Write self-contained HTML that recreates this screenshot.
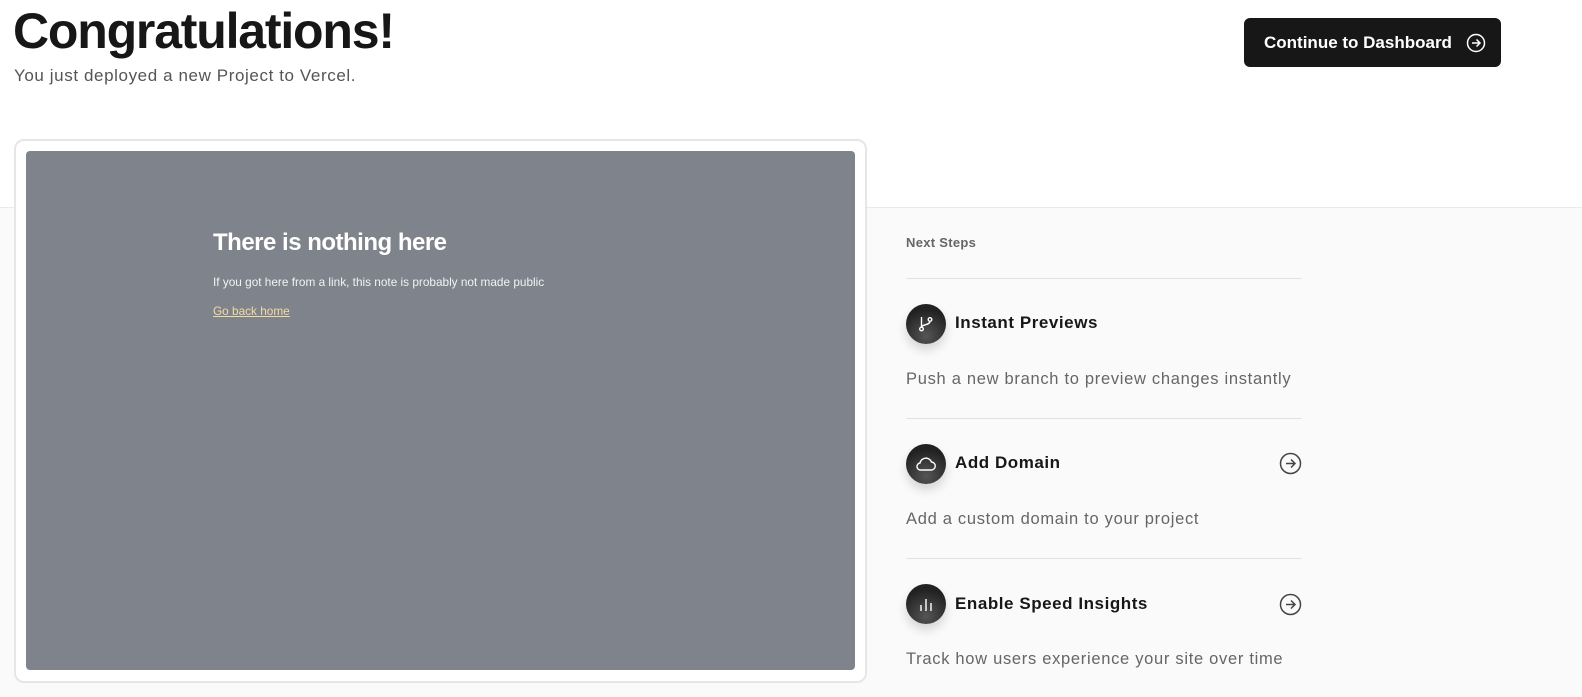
<!DOCTYPE html>
<html><head><meta charset="utf-8"><style>
*{box-sizing:border-box;margin:0;padding:0}
body{width:1582px;height:697px;overflow:hidden;background:#fff;font-family:"Liberation Sans",Arial,sans-serif;position:relative}
.bottom{position:absolute;left:0;top:207px;width:1582px;height:490px;background:#fafafa;border-top:1px solid #eaeaea}
h1{position:absolute;left:13px;top:1px;font-size:50px;font-weight:700;color:#171717;letter-spacing:-1.2px;line-height:60px}
.sub{position:absolute;left:14px;top:66px;font-size:17px;color:#555;letter-spacing:0.6px}
.btn{position:absolute;left:1244px;top:18px;width:257px;height:49px;background:#171717;border-radius:6px;color:#fff;font-size:17px;font-weight:700;display:flex;align-items:center;padding-left:20px}
.btn svg{position:absolute;right:15px;top:15px}
.card{position:absolute;left:14px;top:139px;width:853px;height:544px;background:#fff;border:2px solid #e6e6e6;border-radius:10px}
.shot{position:absolute;left:10px;top:10px;width:829px;height:519px;background:#7f838b;border-radius:4px}
.shot h2{position:absolute;left:187px;top:78px;color:#fff;font-size:24px;font-weight:700;letter-spacing:-0.5px}
.shot p{position:absolute;left:187px;top:124px;color:#f2f2f2;font-size:11.8px}
.shot a{position:absolute;left:187px;top:153px;color:#f3dca2;font-size:11.8px;text-decoration:underline}
.ns{position:absolute;left:906px;top:235px;font-size:13px;font-weight:700;color:#666;letter-spacing:0.3px}
.hr{position:absolute;left:906px;width:396px;height:1px;background:#e2e2e2}
.ic{position:absolute;left:906px;width:40px;height:40px;border-radius:50%;background:radial-gradient(circle at 50% 80%,#555,#222 70%);box-shadow:0 6px 10px rgba(0,0,0,.15);display:flex;align-items:center;justify-content:center}
.t{position:absolute;left:955px;font-size:17px;font-weight:700;color:#171717;letter-spacing:0.55px}
.d{position:absolute;left:906px;font-size:16.5px;color:#666;letter-spacing:0.7px}
.ar{position:absolute;left:1279px}
</style></head><body>
<div class="bottom"></div>
<h1>Congratulations!</h1>
<div class="sub">You just deployed a new Project to Vercel.</div>
<div class="btn">Continue to Dashboard<svg width="20" height="20" viewBox="0 0 20 20" fill="none" stroke="#fff" stroke-width="1.5"><circle cx="10" cy="10" r="8.5"/><path d="M6 10h8M10.5 6.5 14 10l-3.5 3.5"/></svg></div>
<div class="card"><div class="shot"><h2>There is nothing here</h2><p>If you got here from a link, this note is probably not made public</p><a>Go back home</a></div></div>
<div class="ns">Next Steps</div>
<div class="hr" style="top:278px"></div>
<div class="ic" style="top:304px"><svg width="18" height="18" viewBox="0 0 18 18" fill="none" stroke="#fff" stroke-width="1.4"><circle cx="4.5" cy="14" r="1.8"/><circle cx="13" cy="4.5" r="1.8"/><path d="M4.5 2v10.2M13 6.3c0 4-8.5 3-8.5 6"/></svg></div>
<div class="t" style="top:313px">Instant Previews</div>
<div class="d" style="top:370px">Push a new branch to preview changes instantly</div>
<div class="hr" style="top:418px"></div>
<div class="ic" style="top:444px"><svg width="22" height="18" viewBox="0 0 22 18" fill="none" stroke="#fff" stroke-width="1.4"><path d="M6 15h10a4 4 0 0 0 .5-8A6 6 0 0 0 5 8a3.5 3.5 0 0 0 1 7z"/></svg></div>
<div class="t" style="top:453px">Add Domain</div>
<svg class="ar" style="top:452px" width="23" height="23" viewBox="0 0 23 23" fill="none" stroke="#444" stroke-width="1.5"><circle cx="11.5" cy="11.5" r="10"/><path d="M7 11.5h9M12 7.5l4 4-4 4"/></svg>
<div class="d" style="top:510px">Add a custom domain to your project</div>
<div class="hr" style="top:558px"></div>
<div class="ic" style="top:584px"><svg width="16" height="16" viewBox="0 0 16 16" fill="none" stroke="#fff" stroke-width="1.4"><path d="M3 15V9M8 15V3M13 15V7"/></svg></div>
<div class="t" style="top:594px">Enable Speed Insights</div>
<svg class="ar" style="top:593px" width="23" height="23" viewBox="0 0 23 23" fill="none" stroke="#444" stroke-width="1.5"><circle cx="11.5" cy="11.5" r="10"/><path d="M7 11.5h9M12 7.5l4 4-4 4"/></svg>
<div class="d" style="top:650px">Track how users experience your site over time</div>
</body></html>
